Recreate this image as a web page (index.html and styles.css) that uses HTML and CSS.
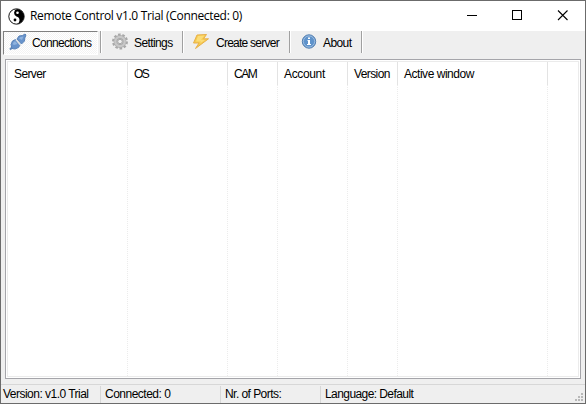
FILE: index.html
```html
<!DOCTYPE html>
<html lang="en">
<head>
<meta charset="utf-8">
<title>Remote Control</title>
<link rel="stylesheet" href="styles.css">
</head>
<body>
<div class="window">
  <header class="titlebar">
    <svg class="app-icon" width="17" height="17" viewBox="0 0 17 17">
      <circle cx="8.500" cy="8.500" r="7.600" fill="#000"/>
      <path d="M9 1A4 4 0 0 0 8.500 8.500A3.800 3.800 0 0 1 7.500 16A7.500 7.500 0 0 1 9 1Z" fill="#fff"/>
      <circle cx="9.500" cy="4.700" r="1.300" fill="#fff"/>
      <circle cx="7" cy="12" r="1.400" fill="#000"/>
      <circle cx="8.500" cy="8.500" r="7.700" fill="none" stroke="#000" stroke-width=".9"/>
    </svg>
    <span class="title">Remote Control v1.0 Trial (Connected: 0)</span>
    <div class="controls">
      <svg width="45" height="30" shape-rendering="crispEdges"><path d="M17 14.500h10" stroke="#000"/></svg>
      <svg width="45" height="30" shape-rendering="crispEdges"><path d="M17.500 9.500h9v9h-9z" fill="none" stroke="#000"/></svg>
      <svg width="45" height="30"><path d="M18 9.500l9.500 9.500M27.500 9.500l-9.500 9.500" stroke="#000" stroke-width="1.100"/></svg>
    </div>
  </header>
  <nav class="toolbar">
    <div class="tool active">
      <svg width="18" height="18" viewBox="0 0 18 18">
        <path d="M1 16.500l3-3" stroke="#5f87ba" stroke-width="2"/>
        <path d="M2 11.500L3.500 8L6.500 6.500L11 12L9.500 14.500L6 16L3 15.500Z" fill="#6893cb" stroke="#5b84b8"/>
        <path d="M3.500 11L5 8.500L6.500 8.500L8.500 11L5 12Z" fill="#8fb3de"/>
        <path d="M7 6.500l5 6" stroke="#dfe2e5" stroke-width="1.500"/>
        <path d="M8 6L10 3L13.500 2.500L16 1L17 2L15.800 5L15.500 8L12.500 11Z" fill="#6893cb" stroke="#5b84b8"/>
        <path d="M10 5.500L11.500 4L14.500 3.500L13 7Z" fill="#8fb3de"/>
      </svg>
      <span class="w-connections">Connections</span>
    </div>
    <div class="tool settings">
      <svg width="18" height="18" viewBox="0 0 18 18">
        <circle cx="9" cy="8.500" r="6.900" fill="none" stroke="#a8a8a8" stroke-width="2.200" stroke-dasharray="2.600 1.735"/>
        <circle cx="9" cy="8.500" r="4.500" fill="none" stroke="#ababab" stroke-width="3.800"/>
        <circle cx="9" cy="8.500" r="4.700" fill="none" stroke="#c8c8c8" stroke-width="2.200"/>
        <circle cx="9" cy="8.500" r="2.300" fill="#efefef" stroke="#a0a0a0"/>
      </svg>
      <span class="w-settings">Settings</span>
    </div>
    <div class="tool create">
      <svg width="18" height="18" viewBox="0 0 18 18">
        <path d="M5 2L14.500 1.500L11.500 5.800L16.500 5.800L3.500 15.500L7 10L1.500 10Z" fill="#f6cb50" stroke="#e8b04a" stroke-linejoin="round"/>
        <path d="M6 3L12.500 2.500L9 6.800L13 7L8 10.500L9 8.500L4 8.500Z" fill="#fbdc78"/>
      </svg>
      <span class="w-create">Create server</span>
    </div>
    <div class="tool about">
      <svg width="16" height="16" viewBox="0 0 16 16">
        <circle cx="8" cy="7.500" r="6.700" fill="#5f93cb" stroke="#5580b0"/>
        <circle cx="8" cy="7.500" r="5.600" fill="none" stroke="#9dbde0"/>
        <path d="M7 3.500h2v1.500H7zM6.500 6h2.500v4h1v1H6v-1h1V7h-.5z" fill="#fff"/>
      </svg>
      <span class="w-about">About</span>
    </div>
  </nav>
  <main class="list">
    <div class="grid">
      <div class="col"><span class="w-server">Server</span></div>
      <div class="col"><span class="w-os">OS</span></div>
      <div class="col"><span class="w-cam">CAM</span></div>
      <div class="col"><span class="w-account">Account</span></div>
      <div class="col"><span class="w-version">Version</span></div>
      <div class="col"><span class="w-active">Active window</span></div>
    </div>
  </main>
  <footer class="status">
    <div class="cell"><span class="w-trial">Version: v1.0 Trial</span></div>
    <div class="cell"><span class="w-connected">Connected: 0</span></div>
    <div class="cell"><span class="w-ports">Nr. of Ports:</span></div>
    <div class="cell"><span class="w-language">Language: Default</span></div>
    <svg class="grip" width="8" height="8" shape-rendering="crispEdges"><path d="M6 0h2v2H6zM3 3h2v2H3zM6 3h2v2H6zM0 6h2v2H0zM3 6h2v2H3zM6 6h2v2H6z" fill="#b8b8b8"/></svg>
  </footer>
</div>
</body>
</html>
```
FILE: styles.css
```css
* { box-sizing: border-box; }
body { margin: 0; }
svg { display: block; flex: none; }
.window {
  width: 586px;
  height: 404px;
  display: flex;
  flex-direction: column;
  border: 1px solid #6b6b6b;
  background: #efefef;
  color: #000;
  font: 12px/14px "Liberation Sans", Arial, sans-serif;
  white-space: nowrap;
  overflow: hidden;
}
.titlebar {
  height: 30px;
  flex: none;
  display: flex;
  align-items: center;
  padding-left: 7px;
  background: #fff;
}
.title {
  margin-left: 5px;
  font: 12px/16px "Open Sans", "Noto Sans", sans-serif;
  letter-spacing: -.33px;
}
.controls { display: flex; margin-left: auto; }
.toolbar {
  position: relative;
  z-index: 0;
  display: flex;
  height: 22px;
  flex: none;
  padding-left: 2px;
}
.tool {
  display: flex;
  align-items: center;
  height: 22px;
  border-right: 1px solid #a0a0a0;
  box-shadow: 1px 0 #fff;
  padding-bottom: 1px;
}
.tool span { padding-top: 3px; }
.active {
  position: relative;
  width: 98px;
  padding-left: 6px;
}
.active::before {
  content: "";
  position: absolute;
  z-index: -1;
  left: 0;
  top: 0;
  width: 93px;
  height: 22px;
  border: 1px solid #fff;
  border-top-color: #808080;
  border-left-color: #808080;
  background: repeating-conic-gradient(#fff 0 25%, #f3f3f3 0 50%) 0 0 / 2px 2px;
}
.active span { margin-left: 5px; }
.settings { width: 82px; padding-left: 10px; }
.settings span { margin-left: 5px; }
.create { width: 107px; padding-left: 9px; }
.create span { margin-left: 6px; }
.about { width: 72px; padding-left: 11px; }
.about span { margin-left: 6px; }
.list {
  height: 320px;
  flex: none;
  margin: 6px 4px 0;
  padding: 1px;
  border: 1px solid #a5a5aa;
  background: #fff;
}
.grid {
  height: 100%;
  border: 1px solid #ebebeb;
  display: grid;
  grid-template-columns: 120px 100px 50px 70px 50px 150px;
}
.col {
  padding: 5px 0 0 6px;
  background:
    linear-gradient(#e3e3e3, #e3e3e3) 100% 0 / 1px 23px no-repeat,
    repeating-linear-gradient(#fff 0 1px, #ececec 1px 2px) 100% 0 / 1px 100% no-repeat;
}
.status {
  height: 19px;
  display: flex;
  margin-top: auto;
  border-top: 1px solid #d7d7d7;
  position: relative;
}
.cell {
  height: 17px;
  margin-top: 1px;
  padding: 1px 0 0 4px;
  border-right: 1px solid #d7d7d7;
}
.cell:nth-child(1) { width: 100px; padding-left: 2px; }
.cell:nth-child(2) { width: 120px; }
.cell:nth-child(3) { width: 100px; }
.cell:nth-child(4) { border: 0; }
.grip { position: absolute; right: 2px; bottom: 2px; }

.w-connections { letter-spacing: -.67px; }
.w-settings { letter-spacing: -.6px; }
.w-create { letter-spacing: -.75px; }
.w-about { letter-spacing: -.6px; }
.w-server { letter-spacing: -.6px; }
.w-os { letter-spacing: -1.5px; }
.w-cam { letter-spacing: -1.5px; }
.w-account { letter-spacing: -.35px; }
.w-version { letter-spacing: -.6px; }
.w-active { letter-spacing: -.47px; }
.w-trial { letter-spacing: -.52px; }
.w-connected { letter-spacing: -.5px; }
.w-ports { letter-spacing: -.55px; }
.w-language { letter-spacing: -.58px; }
```
